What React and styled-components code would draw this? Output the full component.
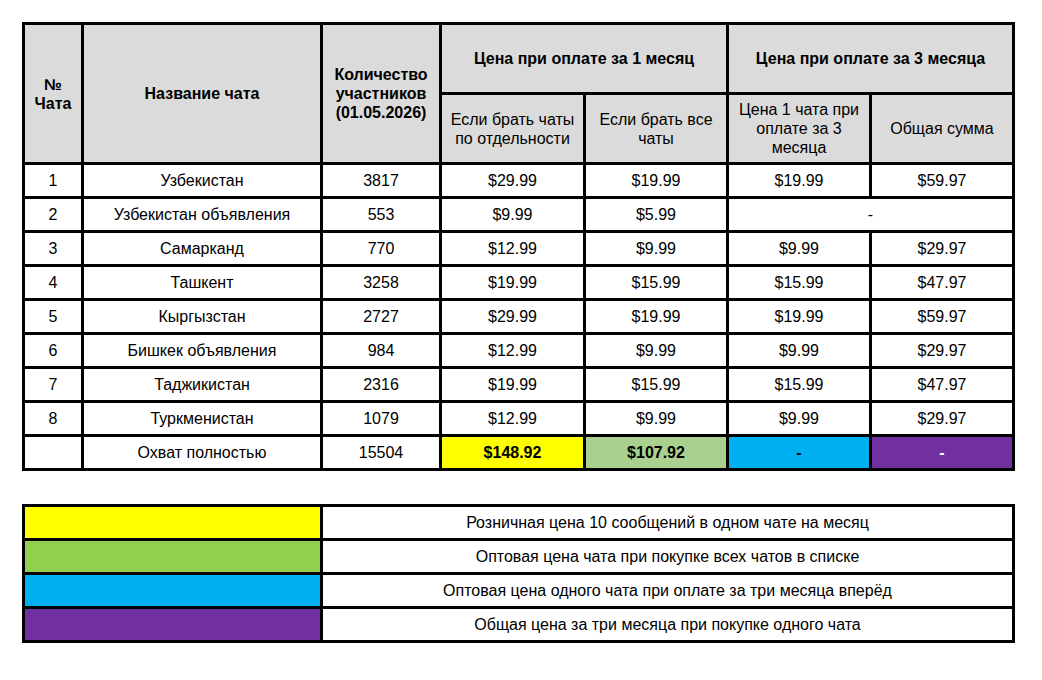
import React from 'react';
import styled, { createGlobalStyle } from 'styled-components';

const GlobalStyle = createGlobalStyle`
    body {
        margin: 0;
        background: #ffffff;
        font-family: "Liberation Sans", Arial, sans-serif;
        color: #000000;
    }
`;

const Page = styled.div`
    padding: 22px 0 0 22px;
    display: flex;
    flex-direction: column;
    gap: 33px;
`;

const Grid = styled.table`
    border-collapse: collapse;
    table-layout: fixed;
    width: 990px;
    font-size: 16px;

    td,
    th {
        border: 3px solid #000;
        text-align: center;
        vertical-align: middle;
        padding: 0 4px;
    }
`;

const HeadCell = styled.th`
    background: #dbdbdb;
    font-weight: ${({ $thin }) => ($thin ? 400 : 700)};
    line-height: 19px;
    height: ${({ $h }) => $h || 'auto'};
`;

const Row = styled.tr`
    height: 31px;
`;

const Cell = styled.td`
    background: ${({ $bg }) => $bg || '#ffffff'};
    color: ${({ $color }) => $color || '#000'};
    font-weight: ${({ $bold }) => ($bold ? 700 : 400)};
    height: 31px;
    padding: 0 4px;
`;

const Swatch = styled.td`
    background: ${({ $bg }) => $bg};
    height: 31px;
`;

const chats = [
    ['1', 'Узбекистан', '3817', '$29.99', '$19.99', '$19.99', '$59.97'],
    ['2', 'Узбекистан объявления', '553', '$9.99', '$5.99', null, null],
    ['3', 'Самарканд', '770', '$12.99', '$9.99', '$9.99', '$29.97'],
    ['4', 'Ташкент', '3258', '$19.99', '$15.99', '$15.99', '$47.97'],
    ['5', 'Кыргызстан', '2727', '$29.99', '$19.99', '$19.99', '$59.97'],
    ['6', 'Бишкек объявления', '984', '$12.99', '$9.99', '$9.99', '$29.97'],
    ['7', 'Таджикистан', '2316', '$19.99', '$15.99', '$15.99', '$47.97'],
    ['8', 'Туркменистан', '1079', '$12.99', '$9.99', '$9.99', '$29.97'],
];

const legend = [
    ['#ffff00', 'Розничная цена 10 сообщений в одном чате на месяц'],
    ['#92d050', 'Оптовая цена чата при покупке всех чатов в списке'],
    ['#00b0f0', 'Оптовая цена одного чата при оплате за три месяца вперёд'],
    ['#7030a0', 'Общая цена за три месяца при покупке одного чата'],
];

export default function App() {
    return (
        <>
            <GlobalStyle />
            <Page>
                <Grid>
                    <colgroup>
                        <col style={{ width: 59 }} />
                        <col style={{ width: 239 }} />
                        <col style={{ width: 119 }} />
                        <col style={{ width: 144 }} />
                        <col style={{ width: 143 }} />
                        <col style={{ width: 143 }} />
                        <col style={{ width: 143 }} />
                    </colgroup>
                    <thead>
                        <tr>
                            <HeadCell rowSpan={2}>
                                №<br />Чата
                            </HeadCell>
                            <HeadCell rowSpan={2}>Название чата</HeadCell>
                            <HeadCell rowSpan={2}>
                                Количество участников (01.05.2026)
                            </HeadCell>
                            <HeadCell colSpan={2} $h="67px">
                                Цена при оплате за 1 месяц
                            </HeadCell>
                            <HeadCell colSpan={2} $h="67px">
                                Цена при оплате за 3 месяца
                            </HeadCell>
                        </tr>
                        <tr>
                            <HeadCell $thin $h="67px">Если брать чаты по отдельности</HeadCell>
                            <HeadCell $thin>Если брать все чаты</HeadCell>
                            <HeadCell $thin>Цена 1 чата при оплате за 3 месяца</HeadCell>
                            <HeadCell $thin>Общая сумма</HeadCell>
                        </tr>
                    </thead>
                    <tbody>
                        {chats.map((c) => (
                            <Row key={c[0]}>
                                <Cell>{c[0]}</Cell>
                                <Cell>{c[1]}</Cell>
                                <Cell>{c[2]}</Cell>
                                <Cell>{c[3]}</Cell>
                                <Cell>{c[4]}</Cell>
                                {c[5] ? (
                                    <>
                                        <Cell>{c[5]}</Cell>
                                        <Cell>{c[6]}</Cell>
                                    </>
                                ) : (
                                    <Cell colSpan={2}>-</Cell>
                                )}
                            </Row>
                        ))}
                        <Row>
                            <Cell />
                            <Cell>Охват полностью</Cell>
                            <Cell>15504</Cell>
                            <Cell $bg="#ffff00" $bold>$148.92</Cell>
                            <Cell $bg="#a9d08e" $bold>$107.92</Cell>
                            <Cell $bg="#00b0f0" $bold>-</Cell>
                            <Cell $bg="#7030a0" $color="#ffffff" $bold>-</Cell>
                        </Row>
                    </tbody>
                </Grid>

                <Grid>
                    <colgroup>
                        <col style={{ width: 298 }} />
                        <col style={{ width: 692 }} />
                    </colgroup>
                    <tbody>
                        {legend.map(([color, text]) => (
                            <Row key={color}>
                                <Swatch $bg={color} />
                                <Cell>{text}</Cell>
                            </Row>
                        ))}
                    </tbody>
                </Grid>
            </Page>
        </>
    );
}
